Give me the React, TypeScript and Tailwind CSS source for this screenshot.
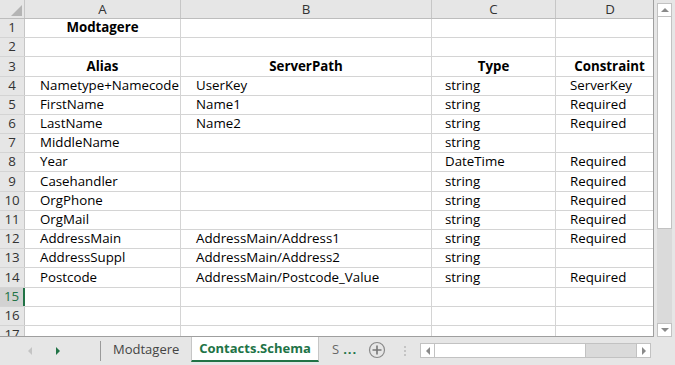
import React from 'react';

const FONT = "font-['Open_Sans',_'Liberation_Sans',_sans-serif]";

type Row = { n: number; h: number; a?: string; b?: string; c?: string; d?: string; head?: boolean; title?: boolean };

const rows: Row[] = [
  { n: 1, h: 19, a: 'Modtagere', title: true },
  { n: 2, h: 19 },
  { n: 3, h: 20, a: 'Alias', b: 'ServerPath', c: 'Type', d: 'Constraint', head: true },
  { n: 4, h: 19, a: 'Nametype+Namecode', b: 'UserKey', c: 'string', d: 'ServerKey' },
  { n: 5, h: 19, a: 'FirstName', b: 'Name1', c: 'string', d: 'Required' },
  { n: 6, h: 19, a: 'LastName', b: 'Name2', c: 'string', d: 'Required' },
  { n: 7, h: 19, a: 'MiddleName', c: 'string' },
  { n: 8, h: 19, a: 'Year', c: 'DateTime', d: 'Required' },
  { n: 9, h: 20, a: 'Casehandler', c: 'string', d: 'Required' },
  { n: 10, h: 19, a: 'OrgPhone', c: 'string', d: 'Required' },
  { n: 11, h: 19, a: 'OrgMail', c: 'string', d: 'Required' },
  { n: 12, h: 19, a: 'AddressMain', b: 'AddressMain/Address1', c: 'string', d: 'Required' },
  { n: 13, h: 19, a: 'AddressSuppl', b: 'AddressMain/Address2', c: 'string' },
  { n: 14, h: 20, a: 'Postcode', b: 'AddressMain/Postcode_Value', c: 'string', d: 'Required' },
  { n: 15, h: 19 },
  { n: 16, h: 19 },
  { n: 17, h: 19 },
];

function Cell({ w, text, center, bold, pad }: { w: string; text?: string; center?: boolean; bold?: boolean; pad: string }) {
  return (
    <div
      className={`${w} shrink-0 h-full border-r border-[#d4d4d4] flex items-end pb-[1px] overflow-hidden whitespace-nowrap text-[13.3px] leading-[17px] text-black ${
        center ? 'justify-center' : pad
      } ${bold ? 'font-bold' : ''}`}
    >
      {text}
    </div>
  );
}

function Grid() {
  return (
    <div className="w-[654px] h-[337px] shrink-0 bg-white border-r border-b border-[#9f9f9f] overflow-hidden flex flex-col">
      {/* column headers */}
      <div className="h-[19px] shrink-0 flex bg-[#e6e6e6] border-b border-[#bdbdbd] text-[13.3px] text-[#333] leading-[18px]">
        <div className="w-[25px] shrink-0 border-r border-[#c6c6c6] relative">
          <div className="absolute right-[2px] bottom-[2px] w-0 h-0 border-l-[11px] border-l-transparent border-b-[11px] border-b-[#b4b4b4]" />
        </div>
        <div className="w-[156px] shrink-0 border-r border-[#c6c6c6] text-center">A</div>
        <div className="w-[251px] shrink-0 border-r border-[#c6c6c6] text-center">B</div>
        <div className="w-[124px] shrink-0 border-r border-[#c6c6c6] text-center">C</div>
        <div className="w-[108px] shrink-0 text-center">D</div>
      </div>
      {rows.map((r) => {
        const sel = r.n === 15;
        return (
          <div key={r.n} className="flex shrink-0 border-b border-[#d4d4d4]" style={{ height: r.h }}>
            <div
              className={`w-[25px] shrink-0 flex items-end justify-center pb-[1px] text-[13.3px] leading-[17px] ${
                sel
                  ? 'bg-[#d2d2d2] text-[#217346] border-r-2 border-[#217346]'
                  : 'bg-[#e6e6e6] text-[#333] border-r border-[#c6c6c6]'
              }`}
            >
              {r.n}
            </div>
            <Cell w="w-[156px]" text={r.a} center={r.head || r.title} bold={r.head || r.title} pad="pl-[15px]" />
            <Cell w="w-[251px]" text={r.b} center={r.head} bold={r.head} pad="pl-[15px]" />
            <Cell w="w-[124px]" text={r.c} center={r.head} bold={r.head} pad="pl-[13px]" />
            <Cell w="w-[108px]" text={r.d} center={r.head} bold={r.head} pad="pl-[14px]" />
          </div>
        );
      })}
    </div>
  );
}

function VScroll() {
  return (
    <div className="w-[15px] h-[334px] mt-[3px] ml-[3px] flex flex-col bg-[#dadada]">
      <div className="h-[14px] bg-white border border-[#c2c2c2] flex items-center justify-center">
        <div className="w-0 h-0 border-l-[4px] border-r-[4px] border-b-[4px] border-l-transparent border-r-transparent border-b-[#8a8a8a]" />
      </div>
      <div className="h-[212px] bg-white border-x border-b border-[#c2c2c2]" />
      <div className="flex-1" />
      <div className="h-[14px] bg-white border border-[#c2c2c2] flex items-center justify-center">
        <div className="w-0 h-0 border-l-[4px] border-r-[4px] border-t-[4px] border-l-transparent border-r-transparent border-t-[#8a8a8a]" />
      </div>
    </div>
  );
}

function TabBar() {
  return (
    <div className="h-[28px] flex items-start text-[13px]">
      <div className="w-[100px] h-full flex items-center">
        <div className="ml-[28px] w-0 h-0 border-t-[4px] border-b-[4px] border-r-[4px] border-t-transparent border-b-transparent border-r-[#c4c4c4]" />
        <div className="ml-[24px] w-0 h-0 border-t-[4px] border-b-[4px] border-l-[4px] border-t-transparent border-b-transparent border-l-[#217346]" />
      </div>
      <div className="w-px h-[20px] mt-[4px] bg-[#9a9a9a]" />
      <div className="w-[90px] h-[25px] flex items-center pl-[12px] text-[#444]">Modtagere</div>
      <div className="w-[128px] h-[25px] bg-white border-x border-[#c6c6c6] border-b-2 border-b-[#217346] flex items-center justify-center font-bold text-[#217346]">
        Contacts.Schema
      </div>
      <div className="w-[49px] h-[25px] flex items-center pl-[13px]">
        <span className="text-[#666]">S</span>
        <span className="ml-[4px] text-[#217346] font-bold tracking-[1px]">...</span>
      </div>
      <div className="h-[25px] flex items-center">
        <svg width="18" height="18" viewBox="0 0 18 18">
          <circle cx="9" cy="9" r="7.5" fill="none" stroke="#8a8a8a" strokeWidth="1.2" />
          <path d="M9 4.5v9M4.5 9h9" stroke="#777" strokeWidth="1.6" />
        </svg>
      </div>
      <div className="ml-[18px] mt-[9px] flex flex-col gap-[2px]">
        <div className="w-[2px] h-[2px] bg-[#c4c4c4]" />
        <div className="w-[2px] h-[2px] bg-[#c4c4c4]" />
        <div className="w-[2px] h-[2px] bg-[#c4c4c4]" />
      </div>
      <div className="ml-[14px] mt-[6px] w-[231px] h-[15px] flex bg-[#dadada] border border-[#c2c2c2]">
        <div className="w-[14px] h-full bg-white border-r border-[#c2c2c2] flex items-center justify-center">
          <div className="w-0 h-0 border-t-[4px] border-b-[4px] border-r-[4px] border-t-transparent border-b-transparent border-r-[#8a8a8a]" />
        </div>
        <div className="w-[151px] h-full bg-white border-r border-[#c2c2c2]" />
        <div className="flex-1" />
        <div className="w-[14px] h-full bg-white border-l border-[#c2c2c2] flex items-center justify-center">
          <div className="w-0 h-0 border-t-[4px] border-b-[4px] border-l-[4px] border-t-transparent border-b-transparent border-l-[#8a8a8a]" />
        </div>
      </div>
    </div>
  );
}

export default function App() {
  return (
    <div className={`w-[675px] h-[365px] overflow-hidden bg-[#e6e6e6] flex flex-col ${FONT}`}>
      <div className="flex h-[337px]">
        <Grid />
        <VScroll />
      </div>
      <TabBar />
    </div>
  );
}
